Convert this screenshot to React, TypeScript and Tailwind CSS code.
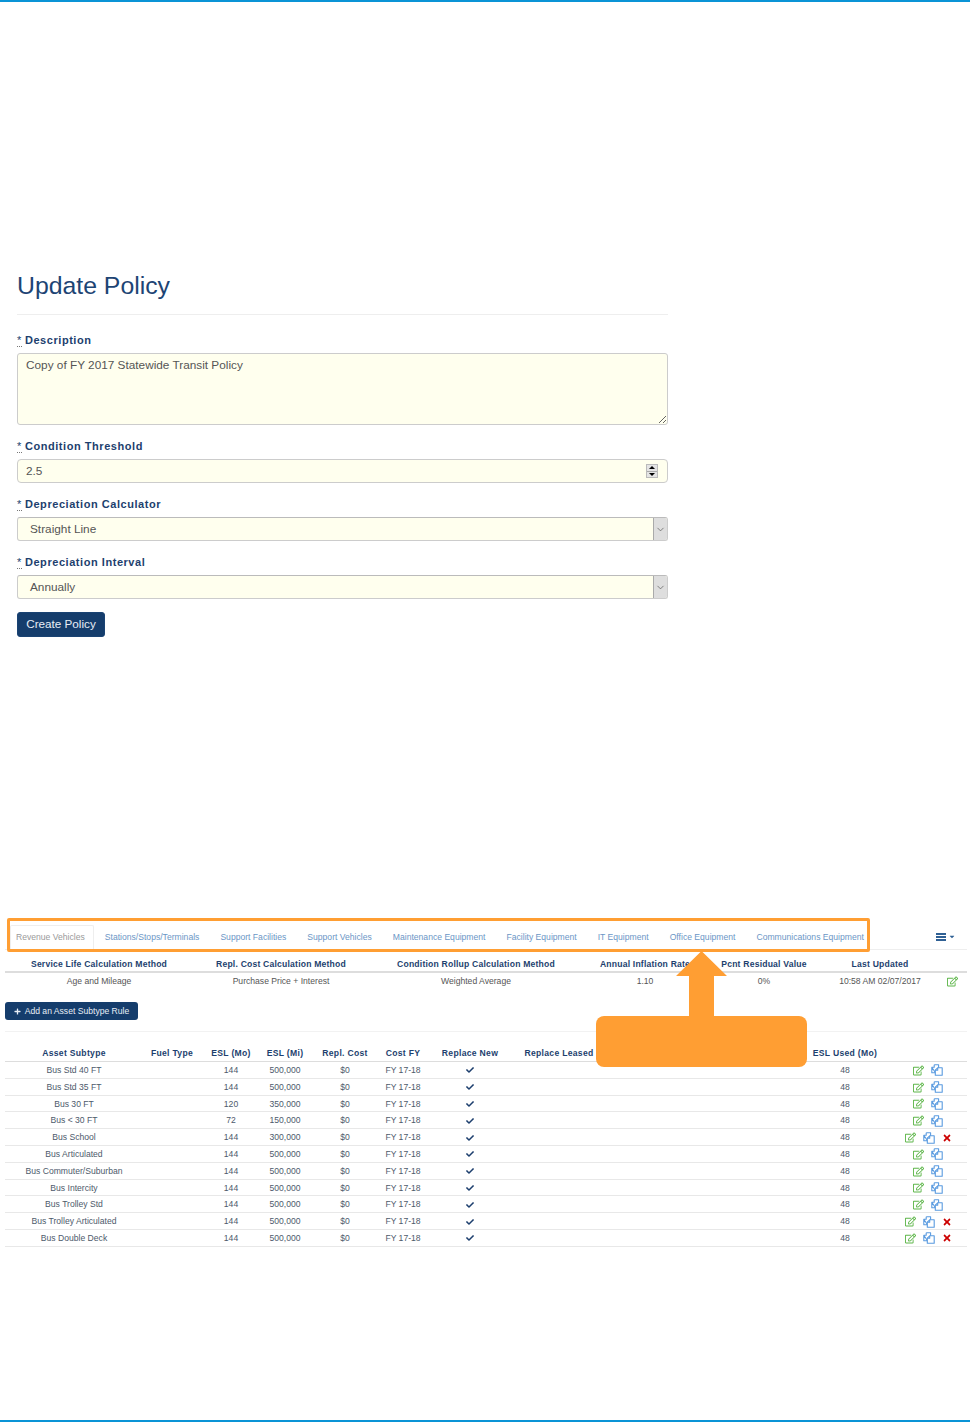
import { ChevronDown } from 'lucide-react'
import { FaCheck, FaPlus, FaRegEdit, FaTimes } from 'react-icons/fa'
import { TiArrowSortedDown } from 'react-icons/ti'

const tabs = [
  'Stations/Stops/Terminals',
  'Support Facilities',
  'Support Vehicles',
  'Maintenance Equipment',
  'Facility Equipment',
  'IT Equipment',
  'Office Equipment',
  'Communications Equipment',
]

const policyHeaders = [
  'Service Life Calculation Method',
  'Repl. Cost Calculation Method',
  'Condition Rollup Calculation Method',
  'Annual Inflation Rate',
  'Pcnt Residual Value',
  'Last Updated',
]

const policyValues = [
  'Age and Mileage',
  'Purchase Price + Interest',
  'Weighted Average',
  '1.10',
  '0%',
  '10:58 AM 02/07/2017',
]

const ruleHeaders = [
  'Asset Subtype',
  'Fuel Type',
  'ESL (Mo)',
  'ESL (Mi)',
  'Repl. Cost',
  'Cost FY',
  'Replace New',
  'Replace Leased',
  '',
  'ESL Used (Mo)',
  '',
]

const rules = [
  { name: 'Bus Std 40 FT', mo: '144', mi: '500,000' },
  { name: 'Bus Std 35 FT', mo: '144', mi: '500,000' },
  { name: 'Bus 30 FT', mo: '120', mi: '350,000' },
  { name: 'Bus < 30 FT', mo: '72', mi: '150,000' },
  { name: 'Bus School', mo: '144', mi: '300,000', canDelete: true },
  { name: 'Bus Articulated', mo: '144', mi: '500,000' },
  { name: 'Bus Commuter/Suburban', mo: '144', mi: '500,000' },
  { name: 'Bus Intercity', mo: '144', mi: '500,000' },
  { name: 'Bus Trolley Std', mo: '144', mi: '500,000' },
  { name: 'Bus Trolley Articulated', mo: '144', mi: '500,000', canDelete: true },
  { name: 'Bus Double Deck', mo: '144', mi: '500,000', canDelete: true },
]

const ruleCols = 'grid grid-cols-[138px_58px_60px_48px_72px_44px_90px_88px_198px_88px_78px] items-center text-center'
const policyCols = 'grid grid-cols-[188px_176px_214px_124px_114px_118px_28px] items-center text-center'

function FieldLabel({ text }: { text: string }) {
  return (
    <label className="block text-[11px] leading-[14px] font-bold tracking-[0.55px] text-[#1d3f6e]">
      <span className="mr-[-0.5px] border-b border-dotted border-[#777] font-normal">*</span> {text}
    </label>
  )
}

function FakeSelect({ value }: { value: string }) {
  return (
    <div className="mt-[6px] flex h-[24px] items-stretch rounded-[3px] border border-[#ccc] border-t-[#bbb] bg-[#ffffee] text-[11.8px] text-[#555]">
      <div className="flex flex-1 items-center pt-[2px] pl-3">{value}</div>
      <div className="flex w-[14px] items-center justify-center rounded-r-[2px] border-l border-[#aaa] bg-[#dedede]">
        <ChevronDown size={11} strokeWidth={1.5} className="text-[#555]" />
      </div>
    </div>
  )
}

// two overlapping sheets, the front one lower right (fa-files-o)
function FilesIcon() {
  return (
    <svg width="12" height="12" viewBox="0 0 12 12" fill="none" stroke="#5a9be0" strokeWidth="1.1" strokeLinejoin="round">
      <path d="M3.2 0.8 H7.6 V4 M4.5 8.8 H0.8 V3.2 Z M3.2 0.8 V3.2 H0.8" />
      <path d="M6.7 3.8 H11.2 V11.2 H4.3 V6.2 Z" fill="#fff" />
      <path d="M6.7 3.8 V6.2 H4.3" />
    </svg>
  )
}

function RowActions({ canDelete }: { canDelete?: boolean }) {
  return (
    <div className="flex items-center justify-center gap-[7px]">
      <FaRegEdit size={11} className="text-[#5cb548]" />
      <FilesIcon />
      {canDelete && <FaTimes size={10} className="text-[#cc0000]" />}
    </div>
  )
}

export default function App() {
  return (
    <div className="relative flex h-[1422px] flex-col justify-between bg-white font-['Liberation_Sans',Arial,sans-serif]">
      <div className="h-[2px] bg-[#0a94d6]" />

      <main className="flex-1">
        <section className="mt-[266px] ml-[17px] w-[651px]">
          <h1 className="text-[24.8px] leading-[36px] text-[#1d4474]">Update Policy</h1>
          <hr className="mt-[10px] border-[#eee]" />

          <div className="mt-[18px]">
            <FieldLabel text="Description" />
            <textarea
              readOnly
              defaultValue="Copy of FY 2017 Statewide Transit Policy"
              className="mt-[6px] block h-[72px] w-full rounded-[3px] border border-[#ccc] bg-[#ffffee] px-[8px] py-[4px] text-[11.8px] leading-[15px] text-[#555] outline-none"
            />
          </div>

          <div className="mt-[14px]">
            <FieldLabel text="Condition Threshold" />
            <div className="mt-[6px] flex h-[24px] items-center justify-between rounded-[4px] border border-[#ccc] bg-[#ffffee] pr-[9px] pl-[8px] text-[11.8px] text-[#555]">
              <span className="pt-[2px]">2.5</span>
              <div className="flex h-[14px] w-[12px] flex-col border border-[#bbb] bg-[#e4e4e4]">
                <div className="flex flex-1 items-center justify-center border-b border-[#aaa]">
                  <div className="h-0 w-0 border-x-[3px] border-b-[3px] border-x-transparent border-b-black" />
                </div>
                <div className="flex flex-1 items-center justify-center">
                  <div className="h-0 w-0 border-x-[3px] border-t-[3px] border-x-transparent border-t-black" />
                </div>
              </div>
            </div>
          </div>

          <div className="mt-[14px]">
            <FieldLabel text="Depreciation Calculator" />
            <FakeSelect value="Straight Line" />
          </div>

          <div className="mt-[14px]">
            <FieldLabel text="Depreciation Interval" />
            <FakeSelect value="Annually" />
          </div>

          <button
            type="button"
            className="mt-[13px] block h-[25px] w-[88px] rounded-[3px] border border-[#1a4373] bg-[#153d6c] pb-[2px] text-center text-[11.7px] text-[#e8eef6]"
          >
            Create Policy
          </button>
        </section>

        <section className="mt-[288px] ml-[5px] w-[962px] text-[8.6px] text-[#4d5a6b]">
          <div className="flex h-[25px] items-stretch justify-between border-b border-[#eee]">
            <nav className="ml-[5px] flex items-stretch gap-[1px]">
              <div className="flex items-center rounded-t-[2px] border-x border-t border-[#eee] bg-white pr-[8px] pl-[5px] text-[#9a9a9a]">
                Revenue Vehicles
              </div>
              {tabs.map((tab) => (
                <div key={tab} className="flex items-center px-[10px] text-[#6b96c6]">
                  {tab}
                </div>
              ))}
            </nav>
            <div className="mr-[11px] flex items-center gap-[2px] text-[#2f6094]">
              <div className="flex h-[8px] w-[10px] flex-col justify-between">
                <div className="h-[2px] bg-[#2f6094]" />
                <div className="h-[2px] bg-[#2f6094]" />
                <div className="h-[2px] bg-[#2f6094]" />
              </div>
              <TiArrowSortedDown size={8} />
            </div>
          </div>

          <div className={`${policyCols} h-[23px] border-b-2 border-[#ddd] pt-[7px] font-bold tracking-[0.2px] text-[#1d3f6e]`}>
            {policyHeaders.map((header) => (
              <div key={header}>{header}</div>
            ))}
            <div />
          </div>
          <div className={`${policyCols} h-[16px] text-[#555]`}>
            {policyValues.map((value) => (
              <div key={value}>{value}</div>
            ))}
            <div className="flex -translate-x-[1px] justify-center">
              <FaRegEdit size={11} className="text-[#5cb548]" />
            </div>
          </div>

          <button
            type="button"
            className="mt-[13px] flex h-[18px] w-[133px] items-center justify-center gap-[4px] rounded-[3px] bg-[#153d6c] text-[#e8eef6]"
          >
            <FaPlus size={7} />
            Add an Asset Subtype Rule
          </button>

          <hr className="mt-[11px] border-[#f2f2f2]" />

          <div className={`${ruleCols} mt-[15px] h-[15px] border-b border-[#ddd] pb-[4px] font-bold tracking-[0.3px] text-[#1d3f6e]`}>
            {ruleHeaders.map((header, i) => (
              <div key={i}>{header}</div>
            ))}
          </div>
          {rules.map((rule) => (
            <div key={rule.name} className={`${ruleCols} h-[16.8px] border-b border-[#e8e8e8] pt-[1px]`}>
              <div>{rule.name}</div>
              <div />
              <div>{rule.mo}</div>
              <div>{rule.mi}</div>
              <div>$0</div>
              <div>FY 17-18</div>
              <div className="flex justify-center">
                <FaCheck size={8} className="text-[#1d3f6e]" />
              </div>
              <div />
              <div />
              <div>48</div>
              <RowActions canDelete={rule.canDelete} />
            </div>
          ))}
        </section>
      </main>

      <div className="h-[2px] bg-[#0a94d6]" />

      {/* callout drawn over the tab strip */}
      <div className="absolute top-[918px] left-[7px] h-[34px] w-[863px] rounded-[2px] border-[3px] border-[#ff9e33]" />
      <svg className="absolute top-[951px] left-[676px]" width="52" height="67" viewBox="0 0 52 67">
        <path d="M25.5 0 L51 25 L38 25 L38 67 L13 67 L13 25 L0 25 Z" fill="#ff9e33" />
      </svg>
      <div className="absolute top-[1016px] left-[596px] h-[51px] w-[211px] rounded-[8px] bg-[#ff9e33]" />
    </div>
  )
}
